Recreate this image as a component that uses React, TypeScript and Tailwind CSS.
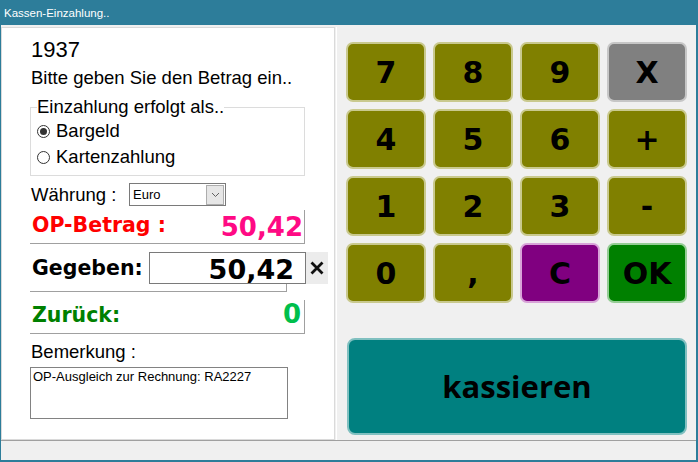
import { useState } from "react";

const keys = [
  { label: "7", tone: "olive" },
  { label: "8", tone: "olive" },
  { label: "9", tone: "olive" },
  { label: "X", tone: "gray" },
  { label: "4", tone: "olive" },
  { label: "5", tone: "olive" },
  { label: "6", tone: "olive" },
  { label: "+", tone: "olive" },
  { label: "1", tone: "olive" },
  { label: "2", tone: "olive" },
  { label: "3", tone: "olive" },
  { label: "-", tone: "olive" },
  { label: "0", tone: "olive" },
  { label: ",", tone: "olive" },
  { label: "C", tone: "purple" },
  { label: "OK", tone: "green" },
];

const toneClass: Record<string, string> = {
  olive: "bg-[#808000] border-[#c9c98e]",
  gray: "bg-[#808080] border-[#c6c6c6]",
  purple: "bg-[#800080] border-[#d8a3d8]",
  green: "bg-[#008000] border-[#94cc94]",
};

const Radio = ({ checked, label, onClick }: { checked: boolean; label: string; onClick: () => void }) => (
  <div className="flex items-center h-[26px] cursor-default" onClick={onClick}>
    <span className="w-[13px] h-[13px] rounded-full border border-[#333] bg-white flex items-center justify-center">
      {checked && <span className="w-[7px] h-[7px] rounded-full bg-[#333]" />}
    </span>
    <span className="ml-[6px] leading-[22px]">{label}</span>
  </div>
);

const App = () => {
  const [mode, setMode] = useState("bar");

  return (
    <div className="w-[698px] h-[462px] bg-[#2d7d9a] flex flex-col font-['Liberation_Sans',Arial,sans-serif] text-black overflow-hidden">
      <div className="h-[25px] shrink-0 flex items-center pl-[4px] pt-[1px] text-white text-[11.5px] leading-[13px]">
        Kassen-Einzahlung..
      </div>

      <div className="ml-px mr-[2px] mb-[2px] flex-1 bg-[#f0f0f0] flex flex-col pt-[2px]">
        <div className="flex h-[413px]">
          {/* left form */}
          <div className="w-[334px] border border-[#dadada] bg-white pl-[28px] pt-[9px] text-[18.5px]">
            <div className="pl-px text-[22px] leading-[26px]">1937</div>
            <div className="pl-px mt-[4px] leading-[22px]">Bitte geben Sie den Betrag ein..</div>

            <fieldset className="mt-[7px] w-[275px] border border-[#dcdcdc] pl-[6px] pb-[5px]">
              <legend className="leading-[22px] px-0">Einzahlung erfolgt als..</legend>
              <Radio checked={mode === "bar"} label="Bargeld" onClick={() => setMode("bar")} />
              <Radio checked={mode === "karte"} label="Kartenzahlung" onClick={() => setMode("karte")} />
            </fieldset>

            <div className="mt-[7px] h-[23px] flex items-center">
              <span className="w-[99px] pl-px leading-[22px]">Währung :</span>
              <div className="w-[97px] h-[23px] border border-[#7a7a7a] flex items-center justify-between">
                <span className="pl-[3px] text-[13px] leading-[15px]">Euro</span>
                <span className="w-[18px] h-[20px] mr-px bg-[#e6e6e6] border border-[#adadad] flex items-center justify-center">
                  <svg width="9" height="6" viewBox="0 0 9 6">
                    <path d="M1 1 L4.5 4.5 L8 1" fill="none" stroke="#606060" strokeWidth="1" />
                  </svg>
                </span>
              </div>
            </div>

            <div className="mt-[4px] w-[275px] h-[34px] border-b border-r border-[#a0a0a0] flex items-start justify-between pt-[2px] font-['DejaVu_Sans',Verdana,sans-serif] font-bold">
              <span className="mt-px pl-[2px] text-[20.5px] leading-[24px] text-[#ff0000]">OP-Betrag :</span>
              <span className="pr-px text-[26px] leading-[30px] text-[#ff0a84]">50,42</span>
            </div>

            <div className="mt-[8px] w-[298px] font-['DejaVu_Sans',Verdana,sans-serif] font-bold">
              <div className="flex h-[32px]">
                <span className="w-[119px] pl-[2px] pt-[4px] text-[20.5px] leading-[24px]">Gegeben:</span>
                <div className="w-[157px] h-[32px] border border-[#7a7a7a] bg-white flex justify-end pt-[2px] pr-[11px]">
                  <span className="text-[27px] leading-[30px]">50,42</span>
                </div>
                <button className="w-[22px] h-[32px] bg-[#ececec] flex items-center justify-center">
                  <svg width="14" height="14" viewBox="0 0 14 14">
                    <path d="M1.5 1.5 L12.5 12.5 M12.5 1.5 L1.5 12.5" stroke="#111" strokeWidth="2.8" />
                  </svg>
                </button>
              </div>
              <div className="w-[257px] h-[8px] border-b border-r border-[#a0a0a0]" />
            </div>

            <div className="mt-[8px] w-[275px] h-[34px] border-b border-r border-[#a0a0a0] flex items-start justify-between font-['DejaVu_Sans',Verdana,sans-serif] font-bold">
              <span className="mt-[3px] pl-[2px] text-[20.5px] leading-[24px] text-[#008000]">Zurück:</span>
              <span className="pr-[3px] text-[26px] leading-[28px] text-[#00bf4c]">0</span>
            </div>

            <div className="mt-[7px] pl-px leading-[22px]">Bemerkung :</div>
            <div className="mt-[4px] w-[258px] h-[52px] border border-[#828282] pl-[2px] pt-px text-[13px] leading-[15px]">
              OP-Ausgleich zur Rechnung: RA2227
            </div>
          </div>

          {/* keypad */}
          <div className="ml-px w-[360px] border-l border-white pl-[9px] pt-[15px]">
            <div className="grid grid-cols-[repeat(4,80px)] grid-rows-[repeat(4,60px)] gap-[7px] font-['DejaVu_Sans',Verdana,sans-serif] font-bold text-[30px]">
              {keys.map((k) => (
                <button
                  key={k.label}
                  className={`rounded-[7px] border-2 flex items-center justify-center text-black ${toneClass[k.tone]}`}
                >
                  {k.label}
                </button>
              ))}
            </div>
            <button className="mt-[35px] ml-px w-[340px] h-[97px] rounded-[8px] border-2 border-[#80c0c0] bg-[#008080] flex items-center justify-center font-['Open_Sans',sans-serif] font-bold text-[31px] text-black">
              kassieren
            </button>
          </div>
        </div>

        <div className="flex-1 border-t border-[#a0a0a0]" />
      </div>
    </div>
  );
};

export default App;
